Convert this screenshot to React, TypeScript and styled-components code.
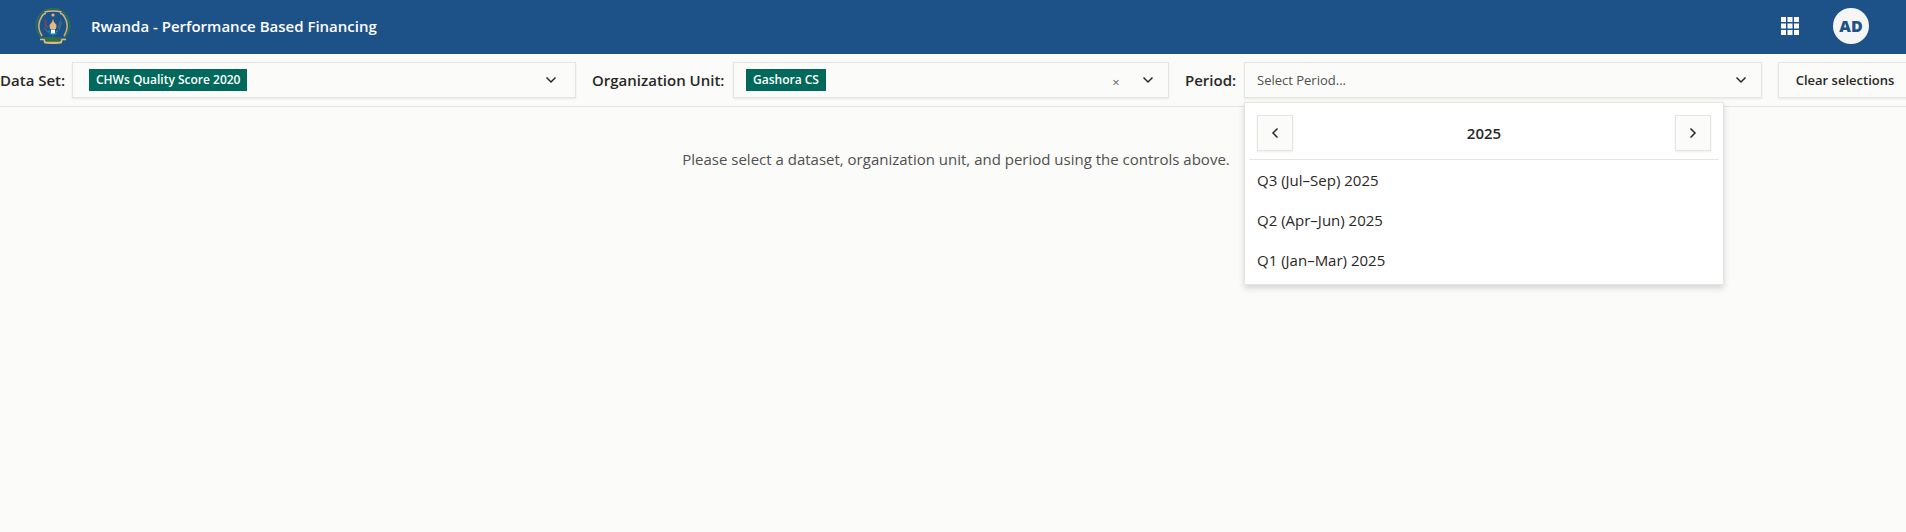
import React, { useState } from "react";
import styled, { createGlobalStyle } from "styled-components";

const GlobalStyle = createGlobalStyle`
  *, *::before, *::after { box-sizing: border-box; }
  body {
    margin: 0;
    min-height: 100vh;
    background: #fbfbf9;
    color: #292827;
    font-family: "Segoe UI", "Open Sans", "Noto Sans", sans-serif;
    font-size: 15px;
    line-height: 20px;
    overflow-x: hidden;
  }
  button { font: inherit; color: inherit; cursor: pointer; }
`;

const Header = styled.header`
  display: flex;
  align-items: center;
  gap: 20px;
  height: 54px;
  padding: 0 37px 2px 35px;
  background: #1d5288;
  color: #fff;
`;

const Title = styled.h1`
  flex: 1;
  margin: 0;
  font-size: 15px;
  font-weight: 600;
  line-height: 20px;
`;

const HeaderButton = styled.button`
  display: flex;
  padding: 0;
  border: 0;
  background: none;
  color: #fff;
`;

const Avatar = styled.button`
  width: 36px;
  height: 36px;
  margin-left: 14px;
  padding: 0;
  border: 0;
  border-radius: 50%;
  background: #f4f5f4;
  && { color: #1d5288; font-size: 16px; font-weight: 800; }
`;

const Content = styled.div`
  margin-right: -6px;
`;

const Toolbar = styled.div`
  display: flex;
  align-items: center;
  padding: 8px 0;
  border-bottom: 1px solid #e5e5e3;
`;

const Label = styled.label<{ $width: number }>`
  flex: none;
  width: ${(p) => p.$width}px;
  font-size: 15px;
  font-weight: 600;
  white-space: nowrap;
`;

const Field = styled.div<{ $share: number; $inset?: number }>`
  position: relative;
  display: flex;
  flex: ${(p) => p.$share} 1 ${(p) => p.$share}px;
  min-width: 0;
  height: 36px;
  margin-right: 16px;
  border: 1px solid #e5e5e3;
  background: #fbfbf9;
  box-shadow: 0 1px 2px rgba(0, 0, 0, 0.08);
  padding: 0 12px 0 12px;
  ${(p) => p.$inset && `padding: 0 ${p.$inset}px;`}
`;

const Trigger = styled.button`
  display: flex;
  flex: 1;
  align-items: center;
  justify-content: space-between;
  min-width: 0;
  padding: 0;
  border: 0;
  background: none;
  && { color: #50504e; font-size: 13px; }
`;

const Tag = styled.span`
  padding: 0 7px;
  background: #00695c;
  color: #fff;
  font-size: 12px;
  font-weight: 600;
  line-height: 22px;
  white-space: nowrap;
`;

const ClearTag = styled.button`
  position: absolute;
  right: 44px;
  top: 10px;
  width: 16px;
  height: 18px;
  padding: 0;
  border: 0;
  background: none;
  && { color: #666; font-size: 13px; line-height: 18px; }
`;

const ClearButton = styled.button`
  flex: none;
  width: 134px;
  height: 36px;
  padding: 0 16px;
  border: 1px solid #e5e5e3;
  background: #fbfbf9;
  box-shadow: 0 1px 2px rgba(0, 0, 0, 0.08);
  && { font-size: 13px; font-weight: 600; white-space: nowrap; }
`;

const Menu = styled.div`
  position: absolute;
  z-index: 2;
  top: 39px;
  left: -1px;
  width: 480px;
  padding: 4px;
  border: 1px solid #e5e5e3;
  background: #fff;
  box-shadow: 0 3px 6px rgba(0, 0, 0, 0.16);
`;

const MenuHeader = styled.div`
  display: flex;
  align-items: center;
  justify-content: space-between;
  padding: 8px;
  border-bottom: 1px solid #e5e5e3;
`;

const Year = styled.strong`
  font-size: 15px;
  font-weight: 600;
`;

const StepButton = styled.button`
  display: flex;
  align-items: center;
  justify-content: center;
  width: 36px;
  height: 36px;
  padding: 0;
  border: 1px solid #e5e5e3;
  background: #fbfbf9;
  box-shadow: 0 1px 2px rgba(0, 0, 0, 0.08);
`;

const Options = styled.ul`
  margin: 0;
  padding: 0;
  list-style: none;
`;

const Option = styled.button`
  display: block;
  width: 100%;
  height: 40px;
  padding: 0 8px;
  border: 0;
  background: none;
  text-align: left;
  &:hover { background: #f3f3f1; }
`;

const Message = styled.p`
  margin: 0;
  padding: 42px 16px;
  color: #50504e;
  text-align: center;
`;

const rotations = { down: 0, left: 90, right: -90 };

function Chevron({ to = "down" }: { to?: keyof typeof rotations }) {
  return (
    <svg width="16" height="16" viewBox="0 0 16 16" fill="none" stroke="#292827" strokeWidth="1.5" aria-hidden="true">
      <path d="M3.500 5.500 8 10l4.500-4.500" transform={`rotate(${rotations[to]} 8 8)`} />
    </svg>
  );
}

function CoatOfArms() {
  return (
    <svg width="36" height="36" viewBox="0 0 36 36" fill="none" role="img" aria-label="Coat of arms of Rwanda">
      <circle cx="18" cy="17.5" r="16.700" stroke="#2c6c54" strokeWidth="1.800" />
      <path d="M8 30q10-3 20 0l-1 3.500q-9 2-18 0z" fill="#2f7048" />
      <path d="M7 8Q0.500 18 7 28M29 8q6.500 10 0 20" stroke="#c9ac7c" strokeWidth="1.600" />
      <path d="M7 8.500q1-3 4-3M29 8.500q-1-3-4-3M9.500 4q8.500-2 17 0" stroke="#d9b682" strokeWidth="1.600" />
      <path d="M5 31.500h4q0 2 2 3h14q2-1 2-3h4M9 34.500q9 1.500 18 0" stroke="#dfb983" strokeWidth="1.600" />
      <circle cx="18" cy="7" r="1.600" fill="#dcb675" />
      <path d="m18 11-1 3-2.500 3 .5 4h6l.5-4-2.500-3z" fill="#e5b97c" />
      <path d="M9.500 12q2 2 1 5l2 3" stroke="#6d4b57" strokeWidth="2" />
      <path d="m26 12-3 8m4-6-3 8M9 20l4 4" stroke="#466b80" strokeWidth="1.100" />
      <path d="M14 22.500a4 4 0 1 0 8 0" stroke="#1686cf" strokeWidth="2" strokeDasharray="2 .6" />
      <path d="M16 21.500h4v4h-4z" fill="#f5fbff" />
    </svg>
  );
}

function AppsIcon() {
  const steps = [0, 6.5, 13];
  return (
    <svg width="18" height="18" viewBox="0 0 18 18" fill="currentColor" aria-hidden="true">
      {steps.map((y) => steps.map((x) => <rect key={`${x}-${y}`} x={x} y={y} width="5" height="5" />))}
    </svg>
  );
}

const quarters = ["Q3 (Jul–Sep)", "Q2 (Apr–Jun)", "Q1 (Jan–Mar)"];

export default function App() {
  const [dataSet, setDataSet] = useState("CHWs Quality Score 2020");
  const [unit, setUnit] = useState("Gashora CS");
  const [period, setPeriod] = useState("");
  const [year, setYear] = useState(2025);
  const [open, setOpen] = useState(true);

  const clearAll = () => {
    setDataSet("");
    setUnit("");
    setPeriod("");
  };

  return (
    <>
      <GlobalStyle />
      <Header>
        <CoatOfArms />
        <Title>Rwanda - Performance Based Financing</Title>
        <HeaderButton type="button" aria-label="Apps"><AppsIcon /></HeaderButton>
        <Avatar type="button">AD</Avatar>
      </Header>
      <Content>
        <Toolbar>
          <Label htmlFor="data-set" $width={72}>Data Set:</Label>
          <Field $share={504} $inset={16}>
            <Trigger id="data-set" type="button" aria-haspopup="listbox">
              {dataSet ? <Tag>{dataSet}</Tag> : <span>Select Data Set...</span>}
              <Chevron />
            </Trigger>
          </Field>
          <Label htmlFor="org-unit" $width={141}>Organization Unit:</Label>
          <Field $share={436}>
            <Trigger id="org-unit" type="button" aria-haspopup="listbox">
              {unit ? <Tag>{unit}</Tag> : <span>Select Organization Unit...</span>}
              <Chevron />
            </Trigger>
            {unit && <ClearTag type="button" aria-label="Clear organization unit" onClick={() => setUnit("")}>×</ClearTag>}
          </Field>
          <Label htmlFor="period" $width={59}>Period:</Label>
          <Field $share={518}>
            <Trigger id="period" type="button" aria-haspopup="listbox" aria-expanded={open} onClick={() => setOpen(!open)}>
              <span>{period || "Select Period..."}</span>
              <Chevron />
            </Trigger>
            {open && (
              <Menu>
                <MenuHeader>
                  <StepButton type="button" aria-label="Previous year" onClick={() => setYear(year - 1)}><Chevron to="left" /></StepButton>
                  <Year>{year}</Year>
                  <StepButton type="button" aria-label="Next year" onClick={() => setYear(year + 1)}><Chevron to="right" /></StepButton>
                </MenuHeader>
                <Options>
                  {quarters.map((quarter) => (
                    <li key={quarter}>
                      <Option type="button" onClick={() => { setPeriod(`${quarter} ${year}`); setOpen(false); }}>
                        {`${quarter} ${year}`}
                      </Option>
                    </li>
                  ))}
                </Options>
              </Menu>
            )}
          </Field>
          <ClearButton type="button" onClick={clearAll}>Clear selections</ClearButton>
        </Toolbar>
        <main>
          <Message>Please select a dataset, organization unit, and period using the controls above.</Message>
        </main>
      </Content>
    </>
  );
}
